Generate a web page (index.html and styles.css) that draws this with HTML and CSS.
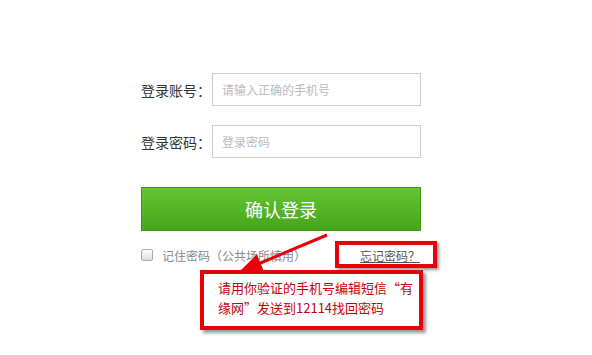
FILE: index.html
```html
<!DOCTYPE html>
<html lang="zh-CN">
<head>
    <meta charset="UTF-8">
    <title>登录</title>
    <link rel="stylesheet" href="styles.css">
</head>
<body>
    <form class="login">
        <div class="row">
            <label for="phone">登录账号：</label>
            <input type="text" id="phone" placeholder="请输入正确的手机号">
        </div>
        <div class="row row-last">
            <label for="pwd">登录密码：</label>
            <input type="password" id="pwd" placeholder="登录密码">
        </div>
        <button type="button" class="btn-login">确认登录</button>
        <div class="extra">
            <label class="remember"><span class="check"></span>记住密码（公共场所慎用）</label>
            <a href="#" class="forgot">忘记密码？</a>
        </div>
    </form>

    <!-- 标注 -->
    <div class="mark-forgot"></div>
    <div class="tip">请用你验证的手机号编辑短信“有<br>缘网”发送到12114找回密码</div>
    <svg class="arrow" width="592" height="355" viewBox="0 0 592 355">
        <line x1="327" y1="235" x2="258" y2="264" stroke="#e8000b" stroke-width="3"/>
        <polygon points="240,271 263.7,270.9 256.9,254.3" fill="#e8000b"/>
    </svg>
</body>
</html>
```

FILE: styles.css
```css
body {
    margin: 0;
    width: 592px;
    height: 355px;
    background: #fff;
    font-family: "Noto Sans CJK SC", "DejaVu Sans", sans-serif;
    position: relative;
    overflow: hidden;
}
.login {
    width: 280px;
    margin-left: 141px;
    padding-top: 73px;
}
.row {
    display: flex;
    align-items: center;
    height: 33px;
    margin-bottom: 19px;
}
.row-last {
    margin-bottom: 29px;
}
.row label {
    flex: 0 0 71px;
    white-space: nowrap;
    font-size: 14px;
    color: #333;
}
.row input {
    flex: 0 0 209px;
    height: 33px;
    box-sizing: border-box;
    border: 1px solid #ccc;
    padding: 0 9px;
    font-size: 12px;
    font-family: inherit;
    outline: none;
}
.row input::placeholder {
    color: #bbb;
}
.btn-login {
    display: block;
    width: 280px;
    height: 44px;
    border: 1px solid #3f9818;
    background: linear-gradient(#66c431, #45a61a);
    color: #fff;
    font-size: 18px;
    font-family: inherit;
    cursor: pointer;
}
.extra {
    display: flex;
    justify-content: space-between;
    align-items: center;
    height: 24px;
    margin-top: 12px;
    font-size: 12px;
}
.remember {
    display: flex;
    align-items: center;
    color: #888;
}
.check {
    width: 10px;
    height: 10px;
    border: 1px solid #aaa;
    border-radius: 2px;
    background: linear-gradient(#fff, #ddd);
    margin-right: 9px;
}
.forgot {
    color: #555;
    text-decoration: underline;
    margin-right: 1px;
}
.mark-forgot {
    position: absolute;
    left: 335px;
    top: 241px;
    width: 94px;
    height: 19px;
    border: 4px solid #e8000b;
    box-shadow: 2px 2px 3px #999;
}
.tip {
    position: absolute;
    left: 200px;
    top: 270px;
    width: 195px;
    height: 48px;
    padding: 4px 6px 0 14px;
    border: 4px solid #e8000b;
    background: #fff;
    box-shadow: 3px 3px 3px #999;
    color: #c8000a;
    font-size: 13px;
    line-height: 20px;
    white-space: nowrap;
}
.arrow {
    position: absolute;
    left: 0;
    top: 0;
    pointer-events: none;
}
```
